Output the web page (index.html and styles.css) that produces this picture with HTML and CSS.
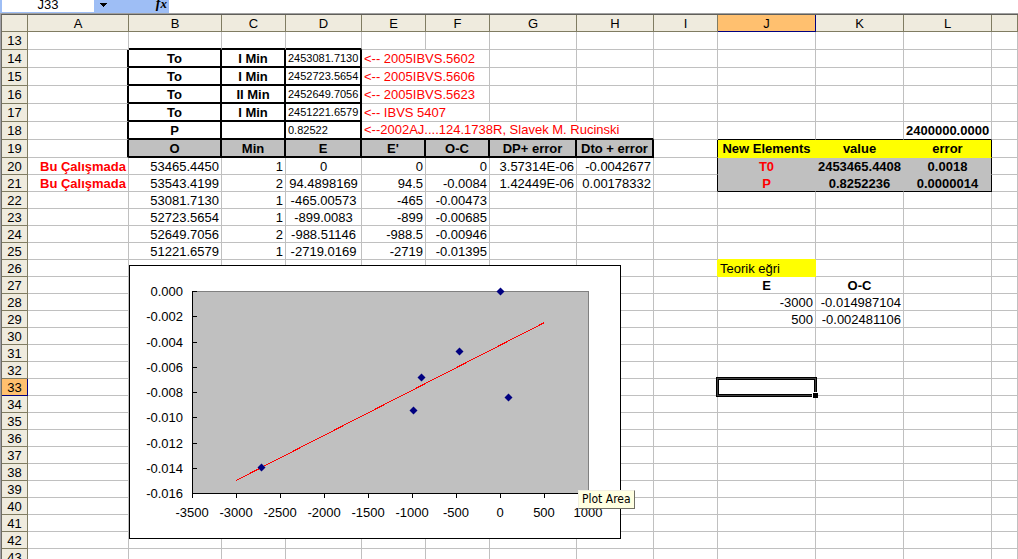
FILE: index.html
```
<!DOCTYPE html>
<html lang="tr">
<head>
<meta charset="utf-8">
<title>J33</title>
<link rel="stylesheet" href="styles.css">
</head>
<body>
<div class="formula-bar">
  <input class="name-box" type="text" value="J33" aria-label="Name Box">
  <div class="bar-tools">
    <button class="drop" type="button" aria-label="Open name list"><svg width="7" height="4" viewBox="0 0 7 4" shape-rendering="crispEdges"><path d="M0 0h7v1H6v1H5v1H4v1H3V3H2V2H1V1H0z"/></svg></button>
    <button class="fx" type="button" aria-label="Insert function"><i>f</i><i class="fx-x">x</i></button>
  </div>
  <input class="formula" type="text" aria-label="Formula">
</div>
<main class="sheet">
<table class="grid">
<colgroup><col class="w-head"><col class="w-a"><col class="w-b"><col class="w-c"><col class="w-d"><col class="w-e"><col class="w-e"><col class="w-g"><col class="w-h"><col class="w-e"><col class="w-j"><col class="w-k"><col class="w-k"><col></colgroup>
<thead><tr><th></th><th>A</th><th>B</th><th>C</th><th>D</th><th>E</th><th>F</th><th>G</th><th>H</th><th>I</th><th class="current">J</th><th>K</th><th>L</th><th></th></tr></thead>
<tbody>
<tr class="tall"><th>13</th><td></td><td class="hb"></td><td class="hb"></td><td class="hb"></td><td></td><td></td><td></td><td></td><td></td><td></td><td></td><td></td><td></td></tr>
<tr class="tall"><th>14</th><td class="hr"></td><td class="box bold">To</td><td class="box bold">I Min</td><td class="box small">2453081.7130</td><td class="note" colspan="2">&lt;-- 2005IBVS.5602</td><td></td><td></td><td></td><td></td><td></td><td></td><td></td></tr>
<tr class="tall"><th>15</th><td class="hr"></td><td class="box bold">To</td><td class="box bold">I Min</td><td class="box small">2452723.5654</td><td class="note" colspan="2">&lt;-- 2005IBVS.5606</td><td></td><td></td><td></td><td></td><td></td><td></td><td></td></tr>
<tr class="tall"><th>16</th><td class="hr"></td><td class="box bold">To</td><td class="box bold">II Min</td><td class="box small">2452649.7056</td><td class="note" colspan="2">&lt;-- 2005IBVS.5623</td><td></td><td></td><td></td><td></td><td></td><td></td><td></td></tr>
<tr class="tall"><th>17</th><td class="hr"></td><td class="box bold">To</td><td class="box bold">I Min</td><td class="box small">2451221.6579</td><td class="note" colspan="2">&lt;-- IBVS 5407</td><td></td><td></td><td></td><td></td><td></td><td></td><td></td></tr>
<tr class="tall"><th>18</th><td class="hr"></td><td class="box bold">P</td><td class="box"></td><td class="box small">0.82522</td><td class="note hb" colspan="4">&lt;--2002AJ....124.1738R, Slavek M. Rucinski</td><td></td><td class="line-b"></td><td class="line-b"></td><td class="line-b right bold">2400000.0000</td><td></td></tr>
<tr class="tall"><th>19</th><td class="hr"></td><td class="box bold gray">O</td><td class="box bold gray">Min</td><td class="box bold gray">E</td><td class="box bold gray">E'</td><td class="box bold gray">O-C</td><td class="box bold gray">DP+ error</td><td class="box bold gray">Dto + error</td><td class="line-r"></td><td class="yellow bold mid">New Elements</td><td class="yellow bold mid">value</td><td class="yellow bold mid line-r">error</td><td></td></tr>
<tr><th>20</th><td class="right bold red">Bu Çalışmada</td><td class="right">53465.4450</td><td class="right">1</td><td class="mid">0</td><td class="right">0</td><td class="right">0</td><td class="right">3.57314E-06</td><td class="right">-0.0042677</td><td class="line-r"></td><td class="fill bold mid red">T0</td><td class="fill bold mid">2453465.4408</td><td class="fill bold mid line-r">0.0018</td><td></td></tr>
<tr><th>21</th><td class="right bold red">Bu Çalışmada</td><td class="right">53543.4199</td><td class="right">2</td><td class="mid">94.4898169</td><td class="right">94.5</td><td class="right">-0.0084</td><td class="right">1.42449E-06</td><td class="right">0.00178332</td><td class="line-r"></td><td class="fill bold mid red line-b">P</td><td class="fill bold mid line-b">0.8252236</td><td class="fill bold mid line-r line-b">0.0000014</td><td></td></tr>
<tr><th>22</th><td></td><td class="right">53081.7130</td><td class="right">1</td><td class="mid">-465.00573</td><td class="right">-465</td><td class="right">-0.00473</td><td></td><td></td><td></td><td></td><td></td><td></td><td></td></tr>
<tr><th>23</th><td></td><td class="right">52723.5654</td><td class="right">1</td><td class="mid">-899.0083</td><td class="right">-899</td><td class="right">-0.00685</td><td></td><td></td><td></td><td></td><td></td><td></td><td></td></tr>
<tr><th>24</th><td></td><td class="right">52649.7056</td><td class="right">2</td><td class="mid">-988.51146</td><td class="right">-988.5</td><td class="right">-0.00946</td><td></td><td></td><td></td><td></td><td></td><td></td><td></td></tr>
<tr><th>25</th><td></td><td class="right">51221.6579</td><td class="right">1</td><td class="mid">-2719.0169</td><td class="right">-2719</td><td class="right">-0.01395</td><td></td><td></td><td></td><td class="yellow-b"></td><td></td><td></td><td></td></tr>
<tr><th>26</th><td></td><td></td><td></td><td></td><td></td><td></td><td></td><td></td><td class="yellow-r"></td><td class="yellow">Teorik eğri</td><td></td><td></td><td></td></tr>
<tr><th>27</th><td></td><td></td><td></td><td></td><td></td><td></td><td></td><td></td><td></td><td class="mid bold">E</td><td class="mid bold">O-C</td><td></td><td></td></tr>
<tr><th>28</th><td></td><td></td><td></td><td></td><td></td><td></td><td></td><td></td><td></td><td class="right">-3000</td><td class="right">-0.014987104</td><td></td><td></td></tr>
<tr><th>29</th><td></td><td></td><td></td><td></td><td></td><td></td><td></td><td></td><td></td><td class="right">500</td><td class="right">-0.002481106</td><td></td><td></td></tr>
<tr><th>30</th><td></td><td></td><td></td><td></td><td></td><td></td><td></td><td></td><td></td><td></td><td></td><td></td><td></td></tr>
<tr><th>31</th><td></td><td></td><td></td><td></td><td></td><td></td><td></td><td></td><td></td><td></td><td></td><td></td><td></td></tr>
<tr><th>32</th><td></td><td></td><td></td><td></td><td></td><td></td><td></td><td></td><td></td><td></td><td></td><td></td><td></td></tr>
<tr><th class="current">33</th><td></td><td></td><td></td><td></td><td></td><td></td><td></td><td></td><td></td><td class="active"><span class="cursor"></span><span class="handle"></span></td><td></td><td></td><td></td></tr>
<tr><th>34</th><td></td><td></td><td></td><td></td><td></td><td></td><td></td><td></td><td></td><td></td><td></td><td></td><td></td></tr>
<tr><th>35</th><td></td><td></td><td></td><td></td><td></td><td></td><td></td><td></td><td></td><td></td><td></td><td></td><td></td></tr>
<tr><th>36</th><td></td><td></td><td></td><td></td><td></td><td></td><td></td><td></td><td></td><td></td><td></td><td></td><td></td></tr>
<tr><th>37</th><td></td><td></td><td></td><td></td><td></td><td></td><td></td><td></td><td></td><td></td><td></td><td></td><td></td></tr>
<tr><th>38</th><td></td><td></td><td></td><td></td><td></td><td></td><td></td><td></td><td></td><td></td><td></td><td></td><td></td></tr>
<tr><th>39</th><td></td><td></td><td></td><td></td><td></td><td></td><td></td><td></td><td></td><td></td><td></td><td></td><td></td></tr>
<tr><th>40</th><td></td><td></td><td></td><td></td><td></td><td></td><td></td><td></td><td></td><td></td><td></td><td></td><td></td></tr>
<tr><th>41</th><td></td><td></td><td></td><td></td><td></td><td></td><td></td><td></td><td></td><td></td><td></td><td></td><td></td></tr>
<tr><th>42</th><td></td><td></td><td></td><td></td><td></td><td></td><td></td><td></td><td></td><td></td><td></td><td></td><td></td></tr>
<tr><th>43</th><td></td><td></td><td></td><td></td><td></td><td></td><td></td><td></td><td></td><td></td><td></td><td></td><td></td></tr>
</tbody>
</table>
<div class="chart">
<svg width="492" height="274" viewBox="0 0 492 274" role="img" aria-label="O-C chart">
  <g shape-rendering="crispEdges">
    <rect x="0.5" y="0.5" width="491" height="273" fill="#fff" stroke="#000"/>
    <rect x="63.5" y="26.5" width="396" height="202" fill="#c0c0c0" stroke="#808080"/>
    <path d="M63.5 26v203M63 228.5h397M64 26.5h4M64 51.5h4M64 77.5h4M64 102.5h4M64 127.5h4M64 152.5h4M64 178.5h4M64 203.5h4M63.5 229v4M107.5 229v4M151.5 229v4M195.5 229v4M239.5 229v4M283.5 229v4M327.5 229v4M371.5 229v4M415.5 229v4M459.5 229v4" fill="none" stroke="#000"/>
    <path d="M107 215.5L415.5 57.5" stroke="#f00" fill="none"/>
  </g>
  <g fill="#000080">
    <path d="M371.5 22.5l4 4-4 4-4-4z"/>
    <path d="M330.5 82.5l4 4-4 4-4-4z"/>
    <path d="M292.5 108.5l4 4-4 4-4-4z"/>
    <path d="M284.5 141.500l4 4-4 4-4-4z"/>
    <path d="M379.5 128.500l4 4-4 4-4-4z"/>
    <path d="M132.5 198.500l4 4-4 4-4-4z"/>
  </g>
  <g class="tick" text-anchor="end">
    <text x="54" y="31">0.000</text><text x="54" y="56">-0.002</text><text x="54" y="82">-0.004</text><text x="54" y="107">-0.006</text><text x="54" y="132">-0.008</text><text x="54" y="157">-0.010</text><text x="54" y="183">-0.012</text><text x="54" y="208">-0.014</text><text x="54" y="233">-0.016</text>
  </g>
  <g class="tick" text-anchor="middle">
    <text x="63" y="252">-3500</text><text x="107" y="252">-3000</text><text x="151" y="252">-2500</text><text x="195" y="252">-2000</text><text x="239" y="252">-1500</text><text x="283" y="252">-1000</text><text x="327" y="252">-500</text><text x="371" y="252">0</text><text x="415" y="252">500</text><text x="459" y="252">1000</text>
  </g>
</svg>
<div class="tip" role="tooltip">Plot Area</div>
</div>
</main>
</body>
</html>
```
FILE: styles.css
```
html, body {
  height: 100%;
  margin: 0;
  overflow: hidden;
}
body {
  display: flex;
  flex-direction: column;
  background: #fff;
  color: #000;
  font: 13px/15px "Liberation Sans", Arial, sans-serif;
}

/* formula bar, scrolled partly off the top edge */
.formula-bar {
  display: flex;
  align-items: flex-end;
  height: 13px;
  flex: none;
  overflow: hidden;
  background: #fff;
}
.name-box, .formula {
  box-sizing: border-box;
  height: 16px;
  margin: 0;
  padding: 0;
  border: 0;
  outline: 0;
  background: #fff;
  font: inherit;
}
.name-box {
  width: 94px;
  border-left: 2px solid #9ebef5;
  border-bottom: 1px solid #9ebef5;
  text-align: center;
}
.formula { flex: 1; }
.bar-tools {
  display: flex;
  justify-content: space-between;
  align-items: flex-end;
  box-sizing: border-box;
  width: 75px;
  height: 18px;
  padding: 0 2px 1px 6px;
  background: #9ebef5;
}
.drop, .fx {
  margin: 0;
  padding: 0;
  border: 0;
  background: none;
  color: #000;
}
.drop {
  display: flex;
  align-items: flex-start;
  height: 9px;
}
.fx { font: bold 14px/16px "Liberation Serif", serif; }
.fx-x { font-size: 13px; }

/* grid */
.sheet {
  position: relative;
  flex: 1;
  min-height: 0;
  overflow: hidden;
  border-top: 1px solid #a0a0a0;
  border-left: 1px solid #a0a0a8;
}
.grid {
  width: 100%;
  table-layout: fixed;
  border-collapse: separate;
  border-spacing: 0;
  border-top: 1px solid #605f5a;
  border-left: 1px solid #6e6c64;
}
.w-head { width: 26px; }
.w-a { width: 101px; }
.w-b { width: 93px; }
.w-c { width: 64px; }
.w-d { width: 76px; }
.w-e { width: 64px; }
.w-g { width: 87px; }
.w-h { width: 77px; }
.w-j { width: 98px; }
.w-k { width: 88px; }

.grid th, .grid td {
  box-sizing: border-box;
  height: 17px;
  padding: 0 2px;
  vertical-align: bottom;
  white-space: nowrap;
}
.grid th {
  padding: 0;
  border-right: 1px solid #807c62;
  border-bottom: 1px solid #807c62;
  background: #efebde;
  font-weight: normal;
  text-align: center;
}
.grid td {
  border-right: 1px solid #c0c0c0;
  border-bottom: 1px solid #c0c0c0;
}
.grid .tall > * { height: 18px; line-height: 16px; }
.grid .current {
  background: #ffc06f;
  border-color: #000080;
}
.grid .hb { border-bottom: 2px solid #000; }
.grid .hr { border-right: 2px solid #000; }
.grid .tall > .box {
  padding: 0;
  border-right: 2px solid #000;
  border-bottom: 2px solid #000;
  line-height: 15px;
  text-align: center;
}
.grid .tall > .small {
  padding-left: 2px;
  font-size: 11px;
  text-align: left;
}
.bold { font-weight: bold; }
.right { text-align: right; }
.mid { text-align: center; }
.red, .note { color: #f00; }
.gray { background: #c0c0c0; }
.grid .mid { padding: 0; }
.grid .fill { background: #c0c0c0; }
.grid .yellow { background: #ff0; border-color: #ff0; }
.grid .yellow-r { border-right-color: #ff0; }
.grid .yellow-b { border-bottom-color: #ff0; }
.grid .line-r { border-right-color: #000; }
.grid .line-b { border-bottom-color: #000; }

/* active cell */
.grid .active { position: relative; }
.cursor {
  position: absolute;
  inset: -1px;
  border: 1px solid #404040;
  box-shadow: 0 0 0 1px #000, inset 0 0 0 1px #000;
}
.handle {
  position: absolute;
  right: -3px;
  bottom: -3px;
  width: 5px;
  height: 5px;
  background: #000;
  box-shadow: -1px -1px 0 #fff;
}

/* chart object floating over the cells */
.chart {
  position: absolute;
  left: 128px;
  top: 251px;
  line-height: 0;
}
.tick { font: 13px "Liberation Sans", Arial, sans-serif; }
.tip {
  position: absolute;
  left: 449px;
  top: 225px;
  padding: 0 3px;
  border: 1px solid #f1efe2;
  border-right-color: #716f64;
  border-bottom-color: #716f64;
  background: #ffffe1;
  font: 12px/17px "DejaVu Sans Condensed", "DejaVu Sans", sans-serif;
  white-space: nowrap;
}
```
